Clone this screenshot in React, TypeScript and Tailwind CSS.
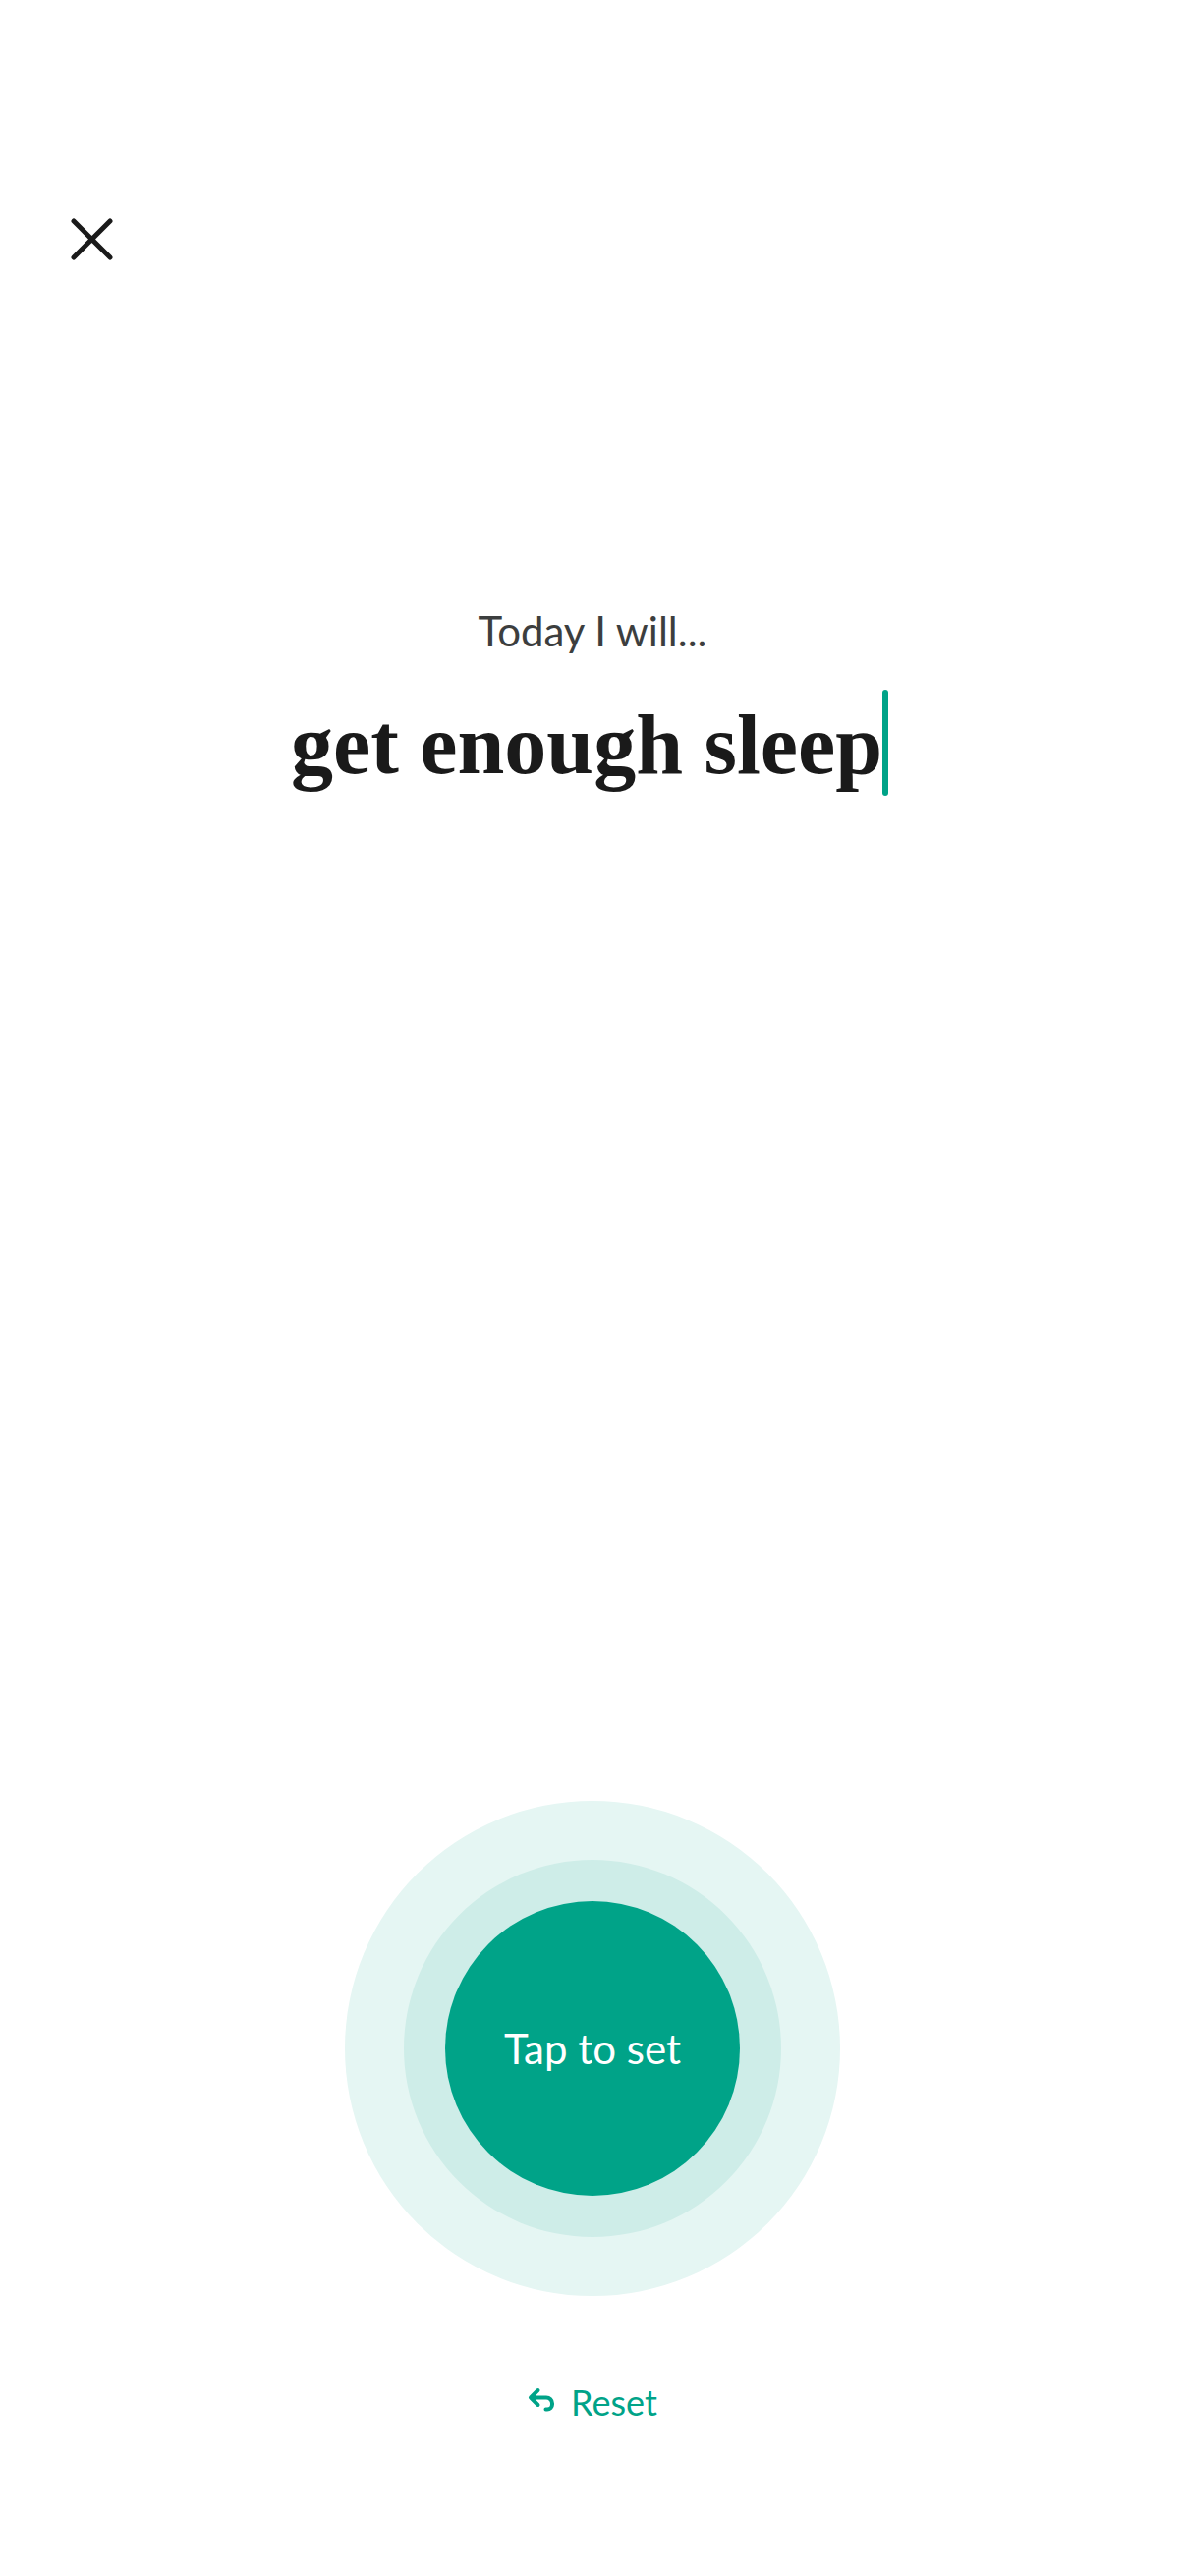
import { useState } from "react";

export default function App() {
  const [goal, setGoal] = useState("get enough sleep");

  return (
    <main className="flex min-h-screen flex-col bg-white font-['Lato','Open_Sans',sans-serif] text-[#3c3e3e]">
      <header className="flex px-[58px] pt-[208px]">
        <button type="button" aria-label="Close" className="flex size-[70px] items-center justify-center text-[#1a1a1a]">
          <CloseIcon />
        </button>
      </header>

      {/* GOAL */}
      <section className="mt-[336px] flex flex-col items-center">
        <label htmlFor="goal" className="text-[42px] leading-[56px]">
          Today I will...
        </label>
        <div className="mt-8 flex h-[108px] max-w-full items-center justify-center pr-[6px]">
          <input
            id="goal"
            type="text"
            value={goal}
            onChange={(e) => setGoal(e.target.value)}
            className="field-sizing-content h-full min-w-0 bg-transparent pt-1 font-['Liberation_Serif',serif] text-[86px] leading-[104px] font-bold text-[#1a1a1a] caret-transparent outline-none"
          />
          <span className="h-full w-[6px] shrink-0 rounded-full bg-[#00a388]" />
        </div>
      </section>

      {/* ACTIONS */}
      <section className="mt-auto flex flex-col items-center pb-[149px]">
        <div className="rounded-full bg-[#e5f6f3] p-[60px]">
          <div className="rounded-full bg-[#ceede8] p-[42px]">
            <button type="button" className="size-[300px] rounded-full bg-[#00a388] text-[42px] leading-[56px] text-white">
              Tap to set
            </button>
          </div>
        </div>
        <button type="button" onClick={() => setGoal("")} className="mt-[80px] flex items-center gap-4 text-[36px] leading-[56px] text-[#00a388]">
          <UndoIcon />
          Reset
        </button>
      </section>
    </main>
  );
}

function CloseIcon() {
  return (
    <svg width="44" height="44" viewBox="0 0 44 44" fill="none" stroke="currentColor" strokeWidth="5" strokeLinecap="round" aria-hidden="true">
      <path d="M4 4l37 37M41 4L4 41" />
    </svg>
  );
}

function UndoIcon() {
  return (
    <svg width="28" height="30" viewBox="0 0 28 30" fill="none" stroke="currentColor" strokeWidth="4" strokeLinecap="round" strokeLinejoin="round" aria-hidden="true">
      <path d="M10.500 3L3 10.500L10.500 18M3 10.500H19a6 6 0 0 1 6 6v1a5 5 0 0 1-5 5h-1.500" />
    </svg>
  );
}
